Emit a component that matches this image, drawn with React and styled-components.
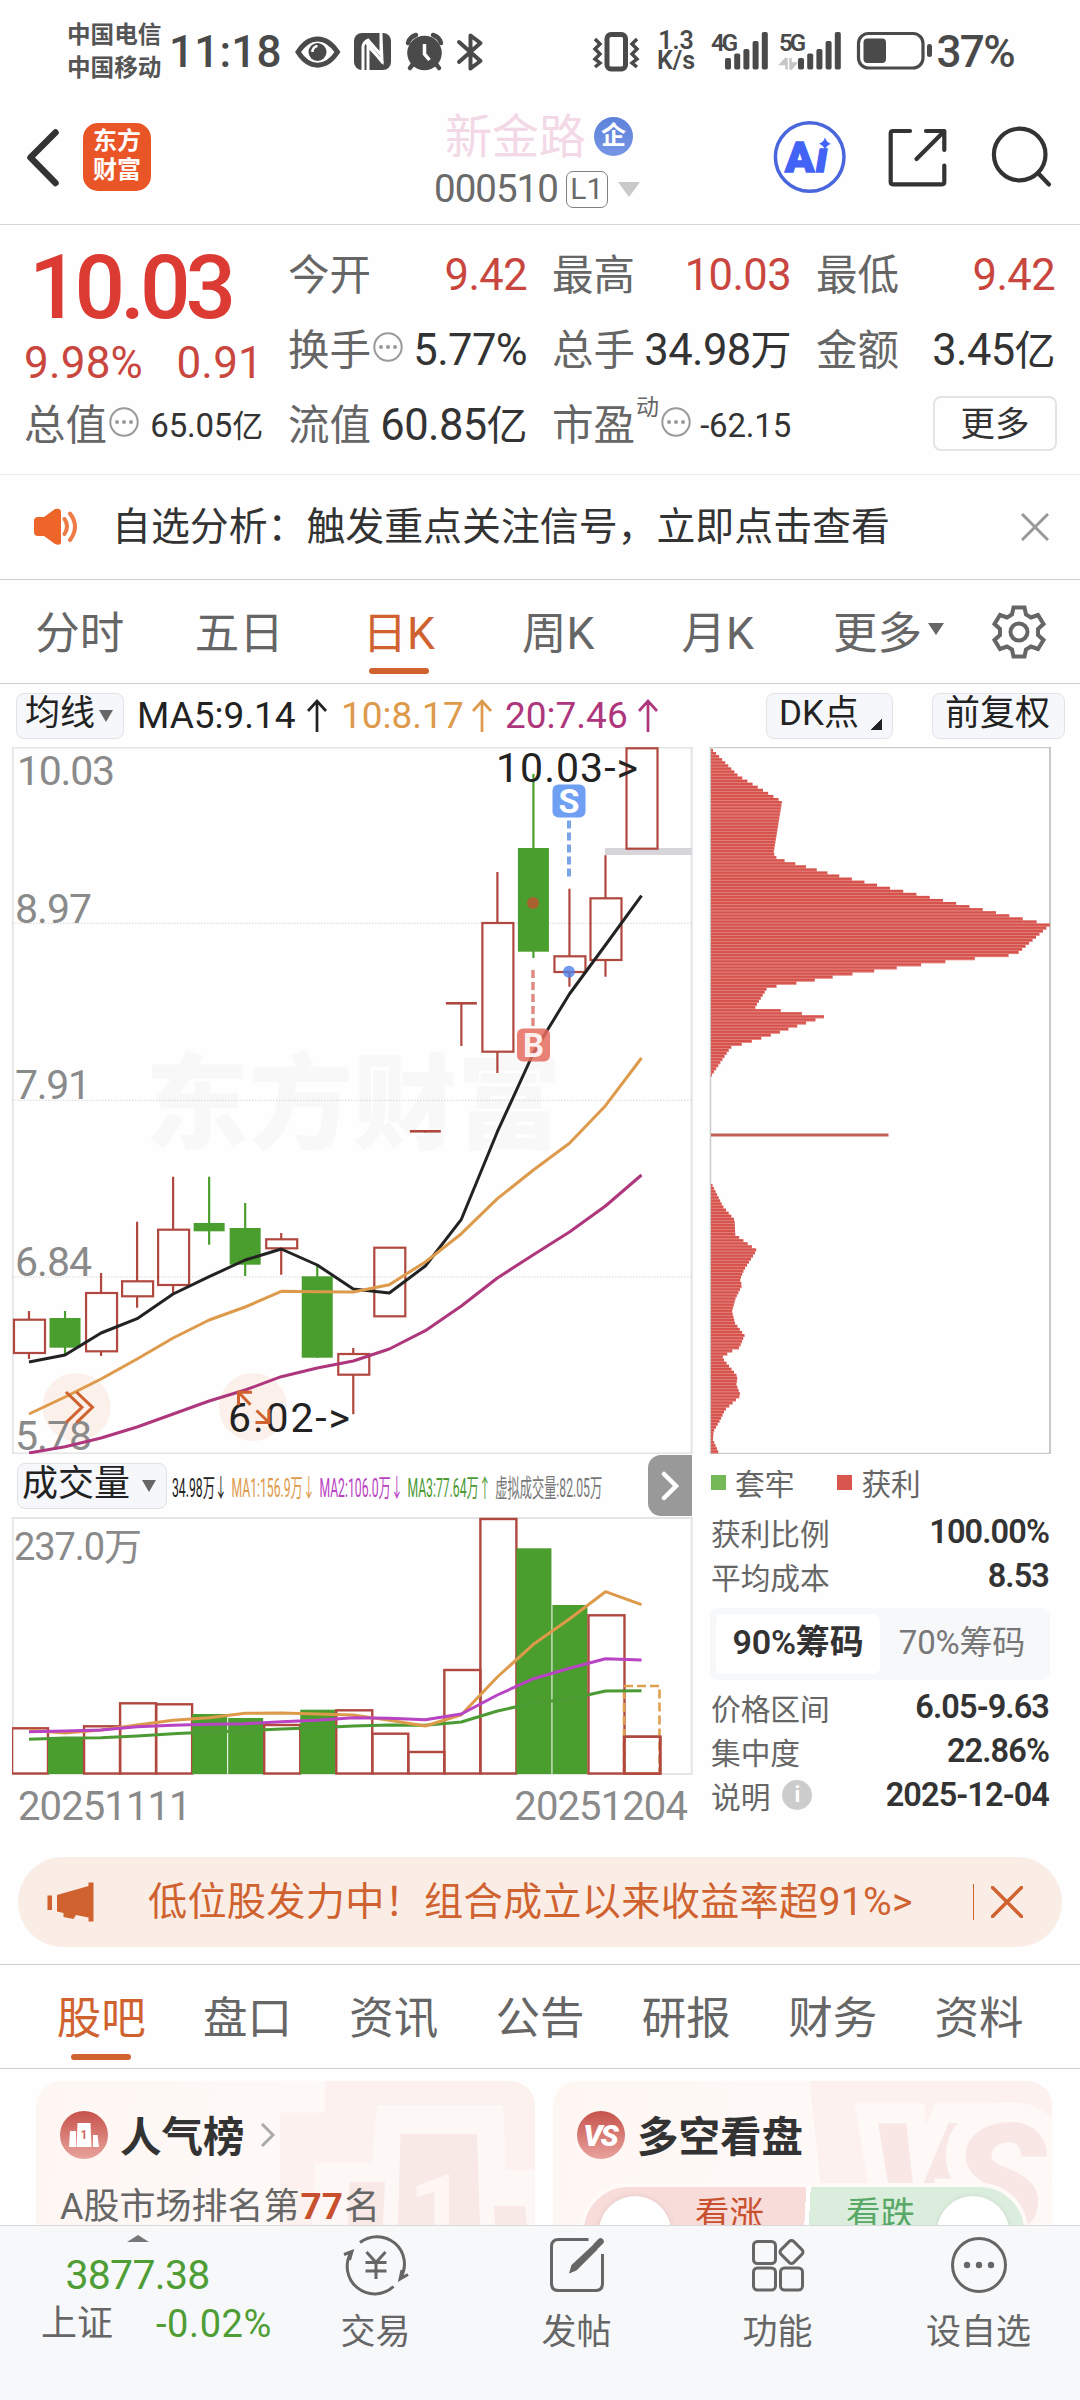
import styled, { createGlobalStyle } from "styled-components";

const GlobalStyle = createGlobalStyle`
  * {
    box-sizing: border-box;
  }
  body {
    margin: 0;
    background: #fefefe;
    font-family: Roboto, "Noto Sans CJK SC", sans-serif;
    color: #333;
  }
  svg {
    display: block;
    flex: none;
  }
`;

const UP = "#b0483f";
const DOWN = "#4a9e2e";
const ACCENT = "#cf622f";

const Page = styled.div`
  width: 1080px;
  height: 2400px;
  overflow: hidden;
  display: flex;
  flex-direction: column;
  white-space: nowrap;
`;

/* ---------- generic bits ---------- */

const Text = styled.span`
  font-size: ${(p) => p.$size}px;
  font-weight: ${(p) => p.$weight || 400};
  letter-spacing: ${(p) => p.$space || 0}px;
  color: ${(p) => p.$color || "#333"};
  line-height: 1;
`;

const Triangle = styled.i`
  width: 0;
  height: 0;
  border: ${(p) => p.$w / 2}px solid transparent;
  border-top: ${(p) => p.$h}px solid ${(p) => p.$color || "#666"};
  border-bottom: 0;
  margin-left: ${(p) => p.$left || 0}px;
`;

/* ---------- status bar ---------- */

const StatusBar = styled.div`
  height: 103px;
  padding: 0 66px 0 67px;
  display: flex;
  align-items: center;
`;

const Carriers = styled.div`
  width: 102px;
  font-size: 23.6px;
  line-height: 33px;
  font-weight: 700;
  color: #555;
`;

const Clock = styled.div`
  width: 125px;
  font-size: 44px;
  font-weight: 500;
  letter-spacing: 0.2px;
  color: #4a4a4a;
`;

const StatusIcons = styled.svg`
  color: #4a4a4a;
`;

const Speed = styled.div`
  width: 54px;
  margin: -2px 7px 0 9px;
  text-align: center;
  font-size: 25px;
  line-height: 20px;
  font-weight: 600;
  color: #4a4a4a;
`;

const Battery = styled.div`
  margin-left: auto;
  font-size: 44px;
  font-weight: 500;
  letter-spacing: -1.6px;
  color: #4a4a4a;
`;

/* ---------- header ---------- */

const Header = styled.header`
  height: 122px;
  padding-left: 24px;
  display: flex;
  align-items: center;
  border-bottom: 1px solid #d4d4d4;
`;

const Logo = styled.div`
  width: 68px;
  height: 68px;
  margin: 0 0 14px 21px;
  border-radius: 15px;
  background: #ea5528;
  color: #fff;
  font-size: 24px;
  line-height: 29px;
  font-weight: 700;
  text-align: center;
  padding-top: 4px;
`;

const TitleBlock = styled.div`
  width: 220px;
  margin-left: 283px;
`;

const TitleRow = styled.div`
  display: flex;
  align-items: center;
  height: ${(p) => p.$h}px;
  padding-left: ${(p) => p.$pad}px;
`;

const CompanyBadge = styled.div`
  width: 39px;
  height: 39px;
  margin-left: 8px;
  border-radius: 50%;
  background: linear-gradient(#5d80da, #7797e4);
  color: #fff;
  font-size: 25px;
  line-height: 37px;
  font-weight: 700;
  text-align: center;
`;

const Level = styled.div`
  width: 42px;
  height: 37px;
  margin-left: 8px;
  border: 1.5px solid #808080;
  border-radius: 7px;
  font-size: 30px;
  line-height: 34px;
  text-align: center;
  color: #6a6a6a;
`;

const HeaderActions = styled.svg`
  margin-left: 102px;
`;

/* ---------- quote ---------- */

const Quote = styled.section`
  height: 250px;
  padding: 13px 24px 0;
  display: grid;
  grid-template-columns: repeat(4, 240px);
  grid-template-rows: repeat(3, 75px);
  column-gap: 24px;
  border-bottom: 1px solid #ebebeb;
`;

const PriceBox = styled.div`
  grid-row: 1 / span 2;
  color: #dc3b33;
`;

const Price = styled.div`
  padding: 16px 0 0 5px;
  height: 107px;
  font-size: 89px;
  line-height: 68px;
  font-weight: 500;
  letter-spacing: -5px;
`;

const Change = styled.div`
  display: flex;
  justify-content: space-between;
  padding-right: 1px;
  font-size: 44px;
  line-height: 36px;
  letter-spacing: 0.2px;
  color: #c9463f;
`;

const Cell = styled.div`
  display: flex;
  align-items: center;
  padding: 0 1px 0 0;
`;

const Label = styled.span`
  font-size: 41.5px;
  line-height: 1;
  color: #666;
`;

const Value = styled.span`
  margin-left: auto;
  font-size: ${(p) => (p.$small ? 33 : 43.5)}px;
  letter-spacing: ${(p) => p.$space ?? -0.6}px;
  line-height: 1;
  color: ${(p) => (p.$up ? "#c9463f" : "#333")};
`;

const Cjk = styled.span`
  font-size: ${(p) => p.$size}px;
`;

const Sup = styled.sup`
  align-self: flex-start;
  margin: 8px 2px 0 1px;
  font-size: 23px;
  line-height: 1;
  color: #666;
`;

const DotsIcon = styled.svg`
  margin: -7px 0 0 ${(p) => p.$left || 0}px;
`;

const MoreButton = styled.button`
  width: 124px;
  height: 55px;
  margin-left: auto;
  margin-right: -2px;
  margin-top: -5px;
  border: 2px solid #e4e4e6;
  border-radius: 8px;
  background: none;
  font: 400 34.5px/44px "Noto Sans CJK SC", sans-serif;
  color: #333;
  padding: 0 0 5px;
`;

/* ---------- notice ---------- */

const Notice = styled.div`
  height: 105px;
  padding: 0 31px 0 33px;
  display: flex;
  align-items: center;
  border-bottom: 1px solid #d0d0d0;
`;

const NoticeText = styled.div`
  margin: -8px 0 0 33px;
  flex: 1;
  font-size: 38.9px;
`;

/* ---------- tabs ---------- */

const Tabs = styled.nav`
  height: 104px;
  display: flex;
  align-items: center;
  border-bottom: 1px solid #d0d0d0;
`;

const Tab = styled.div`
  position: relative;
  width: ${(p) => p.$w}px;
  height: 100%;
  padding-bottom: 5px;
  display: flex;
  align-items: center;
  justify-content: center;
  font-size: 44.5px;
  color: ${(p) => (p.$active ? ACCENT : "#666")};

  &::after {
    content: "";
    display: ${(p) => (p.$active ? "block" : "none")};
    position: absolute;
    bottom: ${(p) => p.$bar}px;
    left: calc(50% - 30px);
    width: 60px;
    height: 6px;
    border-radius: 3px;
    background: ${ACCENT};
  }
`;

const GearIcon = styled.svg`
  margin-left: 12px;
`;

/* ---------- moving average row ---------- */

const MaRow = styled.div`
  height: 63px;
  padding: 0 15px 0 16px;
  display: flex;
  align-items: center;
`;

const Chip = styled.div`
  width: ${(p) => p.$w}px;
  height: 46px;
  margin-left: ${(p) => p.$left || 0}px;
  padding-left: ${(p) => p.$pad}px;
  display: flex;
  flex: none;
  align-items: center;
  border: 1.5px solid #e0e2e6;
  border-radius: 8px;
  background: #f6f7fa;
  font-size: ${(p) => p.$size || 35}px;
  line-height: 44px;
  color: #222;
`;

const ChipText = styled.span`
  margin-top: -3px;
`;

const MaItem = styled.div`
  width: ${(p) => p.$w}px;
  margin-left: ${(p) => p.$left}px;
  display: flex;
  align-items: center;
  justify-content: space-between;
  font-size: 37px;
  color: ${(p) => p.$color};
`;

const Corner = styled.i`
  width: 12px;
  height: 12px;
  margin: 16px 0 0 11px;
  background: linear-gradient(135deg, transparent 50%, #222 50%);
`;

/* ---------- charts ---------- */

const ChartArea = styled.div`
  height: 1093px;
  display: flex;
`;

const Left = styled.div`
  width: 698px;
  padding-left: 12px;
`;

const Right = styled.div`
  width: 342px;
  margin-left: 11px;
`;

const AxisText = styled.text`
  font-family: Roboto, "Noto Sans CJK SC", sans-serif;
  font-size: ${(p) => p.$size || 41}px;
  fill: ${(p) => p.$fill || "#8a8a8a"};
`;

const Halo = styled(AxisText)`
  paint-order: stroke;
`;

const VolumeBar = styled.div`
  height: 63px;
  width: 680px;
  padding-left: 5px;
  display: flex;
  align-items: center;
`;

const VolumeLegend = styled.div`
  width: 470px;
  margin-left: 5px;
  display: flex;
  gap: 9px;
  font-size: 25px;
  transform: scaleX(0.488);
  transform-origin: left;
`;

const Colored = styled.span`
  flex: none;
  color: ${(p) => p.$color};
`;

const Expander = styled.div`
  width: 44px;
  height: 61px;
  flex: none;
  margin-left: auto;
  border-radius: 13px 0 0 13px;
  background: #999;
  display: flex;
  align-items: center;
  justify-content: center;
`;

const Dates = styled.div`
  display: flex;
  justify-content: space-between;
  width: 680px;
  padding: 9px 5px 0 6px;
  font-size: 40px;
  line-height: 46px;
  letter-spacing: -0.9px;
  color: #8a8a8a;
`;

const ChipLegend = styled.div`
  height: 56px;
  display: flex;
  align-items: center;
  font-size: 29.7px;
  color: #666;
`;

const Swatch = styled.i`
  width: 15px;
  height: 15px;
  background: ${(p) => p.$color};
  margin-right: 9px;
  margin-left: ${(p) => p.$left || 0}px;
`;

const StatRow = styled.div`
  height: 44px;
  display: flex;
  align-items: center;
  justify-content: space-between;
  padding: 0 2px 0 2px;
  font-size: 29.7px;
  color: #666;

  b {
    font-size: 32.5px;
    font-weight: 600;
    letter-spacing: -0.9px;
    color: #333;
  }
`;

const StatLabel = styled.span`
  display: flex;
  align-items: center;
`;

const Info = styled.i`
  width: 30px;
  height: 30px;
  margin-left: 12px;
  border-radius: 50%;
  background: #ccc;
  color: #fff;
  font: 700 22px/30px Roboto, sans-serif;
  text-align: center;
`;

const Toggle = styled.div`
  width: 340px;
  height: 72px;
  margin: 10px 0 5px 1px;
  padding: 6px;
  display: flex;
  border-radius: 8px;
  background: #f7f8fa;
`;

const ToggleItem = styled.div`
  width: 164px;
  border-radius: 7px;
  background: ${(p) => (p.$active ? "#fff" : "none")};
  color: ${(p) => (p.$active ? "#333" : "#777")};
  font-weight: ${(p) => (p.$active ? 600 : 400)};
  font-size: ${(p) => (p.$active ? 34 : 33)}px;
  line-height: 57px;
  letter-spacing: -0.2px;
  text-align: center;
`;

/* ---------- banner ---------- */

const Banner = styled.div`
  height: 90px;
  margin: 17px 18px;
  padding: 0 39px 0 29px;
  display: flex;
  align-items: center;
  border-radius: 45px;
  background: #faede6;
  color: ${ACCENT};
  font-size: 39.2px;
`;

const BannerText = styled.div`
  flex: 1;
  margin: -9px 0 0 54px;
  letter-spacing: 0.25px;
`;

const Divider = styled.i`
  width: 1.5px;
  height: 36px;
  margin-right: 17px;
  background: ${ACCENT};
`;

/* ---------- cards ---------- */

const SectionTabs = styled(Tabs)`
  height: 105px;
  padding-left: 28px;
  border-top: 1px solid #d0d0d0;
`;

const Cards = styled.div`
  height: 156px;
  overflow: hidden;
  padding: 12px 27px 0 36px;
  display: flex;
  gap: 18px;
`;

const Card = styled.div`
  position: relative;
  width: 499px;
  height: 200px;
  border-radius: 25px;
  overflow: hidden;
  background: linear-gradient(100deg, #fef6f3, #fefaf8 60%, #fdf3f1);
`;

const CardArt = styled.svg`
  position: absolute;
  left: 0;
  top: 0;
`;

const CardHead = styled.div`
  position: relative;
  height: 108px;
  padding-left: 24px;
  display: flex;
  align-items: center;
`;

const CardTitle = styled.div`
  margin: -3px 15px 0 12px;
  font-size: 41.5px;
  font-weight: 600;
  color: #333;
`;

const RankLine = styled.div`
  position: relative;
  padding-left: 24px;
  font-size: 36px;
  line-height: 36px;
  color: #666;

  b {
    font-size: 37px;
    color: #c9502f;
    margin: 0 1px;
  }
`;

const Vote = styled.div`
  position: relative;
  width: 448px;
  height: 96px;
  margin: -6px 0 0 27px;
  border: 4px solid #fff9f8;
  border-radius: 48px;
  overflow: hidden;
  display: flex;
  background: linear-gradient(93deg, #f7dcd9 50%, #fff 50%, #fff 51%, #dbeedd 51%);
`;

const VoteSide = styled.div`
  flex: 1;
  display: flex;
  flex-direction: ${(p) => (p.$right ? "row-reverse" : "row")};
  padding: ${(p) => (p.$right ? "9px 15px 0 0" : "9px 0 0 15px")};
  font-size: 34.5px;
  line-height: 36px;
  color: ${(p) => (p.$right ? "#58a868" : "#c9502f")};
`;

const VoteDot = styled.i`
  width: 72px;
  height: 72px;
  border-radius: 50%;
  background: #fff;
  box-shadow: 0 0 5px rgba(120, 80, 80, 0.15);
  margin: ${(p) => (p.$right ? "0 0 0 22px" : "0 24px 0 0")};
`;

/* ---------- bottom nav ---------- */

const BottomNav = styled.footer`
  flex: 1;
  display: flex;
  border-top: 1.5px solid #d8d9db;
  background: #f7f8fa;
`;

const IndexBox = styled.div`
  width: 275px;
  padding-top: 9px;
  display: flex;
  flex-direction: column;
  align-items: center;
`;

const IndexValue = styled.div`
  margin-top: 9px;
  font-size: 41px;
  line-height: 48px;
  letter-spacing: -0.7px;
  color: #4f9d35;
`;

const IndexRow = styled.div`
  align-self: stretch;
  display: flex;
  align-items: center;
  justify-content: space-between;
  padding: 1px 3px 0 41px;
  font-size: 36px;
  line-height: 48px;
  color: #666;
`;

const NavItem = styled.div`
  width: 201px;
  padding-top: 6px;
  display: flex;
  flex-direction: column;
  align-items: center;
  font-size: 35px;
  line-height: 46px;
  color: #666;

  svg {
    margin-bottom: 12px;
  }
`;

/* ---------- data ---------- */

const cx = (i) => 29 + 36.03 * i;

// [up, bodyTop, bodyBottom, wickTop, wickBottom]
const candles = [
  [1, 1319.7, 1353, 1311, 1359],
  [0, 1318, 1347.7, 1311, 1354],
  [1, 1293, 1351.3, 1273, 1356],
  [1, 1281.3, 1296.3, 1221.7, 1307.7],
  [1, 1229.7, 1285, 1176.7, 1294],
  [0, 1223, 1231.3, 1176.7, 1244.7],
  [0, 1228, 1264.7, 1203, 1276],
  [1, 1239.3, 1248.3, 1233, 1274.7],
  [0, 1276.3, 1357.7, 1265, 1357.7],
  [1, 1354, 1374.7, 1348, 1414.3],
  [1, 1247.7, 1316.3, 1247.7, 1316.3],
  [1, 1131.3, 1131.3, 1131.3, 1132.6],
  [1, 1003.3, 1003.3, 1003.3, 1046],
  [1, 923, 1051.7, 872, 1073],
  [0, 848, 951.7, 774, 958],
  [1, 956.3, 972, 888.7, 986.7],
  [1, 898.3, 960, 855.3, 976.7],
  [1, 748.3, 848.7, 748.3, 848.7],
];

const ma5 = [1362, 1355, 1333, 1318.7, 1294, 1276.7, 1260, 1249, 1265, 1289, 1293, 1266, 1219.3, 1131.7, 1053, 994, 945, 895.7];
const ma10 = [1414, 1397, 1379, 1359, 1338, 1320, 1307, 1291.3, 1291.7, 1292, 1284.7, 1262, 1233.7, 1198.7, 1170, 1143.3, 1105.7, 1058];
const ma20 = [1453, 1446.7, 1438, 1427, 1414, 1401, 1390, 1376.7, 1368, 1361, 1349, 1330.7, 1306, 1278, 1254.7, 1232, 1206, 1175];

const volumes = [1727.3, 1736.3, 1725.3, 1702.3, 1703.3, 1713, 1717, 1724, 1708.7, 1709.3, 1732.7, 1751, 1669, 1518, 1547.3, 1604, 1614.3, 1735.7];
const greenVolumes = [1, 5, 6, 8, 14, 15];
const vma1 = [1729.3, 1732, 1729, 1724, 1719.3, 1716.7, 1712.3, 1712, 1713, 1714, 1719.3, 1725, 1713.7, 1676, 1643.3, 1618, 1590.7, 1603.7];
const vma2 = [1730.7, 1730, 1729, 1725.7, 1724.3, 1723.3, 1722.7, 1720.7, 1719.3, 1716.7, 1717.3, 1718.7, 1713, 1694, 1677.7, 1667.3, 1657.7, 1659];
const vma3 = [1738.3, 1737, 1736.7, 1735, 1732.7, 1731, 1729.7, 1728, 1726.7, 1725, 1724, 1724.3, 1721, 1710, 1702, 1698, 1690, 1689.7];

// chip distribution outline: [y, right edge]
const profile = [
  [749, 713], [774, 738], [777, 743], [800, 782], [852, 773.5], [857, 777], [872.7, 832], [885, 882.6],
  [903.3, 961.8], [916.7, 1020], [923.3, 1050], [953.3, 1016], [956, 988], [958.3, 960], [967.3, 888.5],
  [974, 841], [980.7, 802], [983.3, 785], [986, 767.6], [1006, 755], [1008.7, 778], [1012, 800.7],
  [1015.3, 824.5], [1021.7, 805], [1028.3, 786], [1031.7, 776.6], [1040.7, 748.7], [1046, 730.7], [1074, 711.5],
];
const profileLow = [
  [1181, 711], [1205, 723], [1218.3, 734.5], [1233.3, 735.3], [1248.7, 756.7], [1268.3, 744], [1278.3, 740],
  [1284, 742], [1296.7, 735.6], [1310, 732], [1321.7, 735], [1334, 744.5], [1346, 739.5], [1350, 730.7],
  [1356, 722], [1375, 737.5], [1383.3, 736.4], [1394, 740.6], [1408.3, 725], [1418.3, 720.3], [1430, 713.5],
  [1438.3, 713], [1452, 719],
];

const rowsOf = (points) => {
  const rows = [];
  for (let y = points[0][0]; y < points[points.length - 1][0]; y += 3.06) {
    const k = Math.max(1, points.findIndex((p) => p[0] > y));
    const [y0, x0] = points[k - 1];
    const [y1, x1] = points[k];
    rows.push([y, x0 + ((x1 - x0) * (y - y0)) / (y1 - y0)]);
  }
  return rows;
};

const line = (ys) => ys.map((y, i) => `${cx(i)},${y}`).join(" ");

const quoteCells = [
  ["今开", "9.42"],
  ["最高", "10.03"],
  ["最低", "9.42"],
];

/* ---------- icons ---------- */

const UpArrow = () => (
  <svg width="20" height="34" viewBox="0 0 20 34" fill="none" stroke="currentColor" strokeWidth="2.7">
    <path d="M10 33V2M1 12l9-10 9 10" />
  </svg>
);

const Dots = ({ left }) => (
  <DotsIcon $left={left} width="30" height="30" viewBox="-15 -15 30 30">
    <circle r="13.7" fill="none" stroke="#999" strokeWidth="2" />
    <circle cx="-7" r="2" fill="#999" />
    <circle r="2" fill="#999" />
    <circle cx="7" r="2" fill="#999" />
  </DotsIcon>
);

const Signal = ({ x }) => (
  <g fill="currentColor">
    {[58, 53.5, 49, 41, 32].map((y, i) => (
      <rect key={y} x={x + i * 9.2} y={y} width="6" height={69.5 - y} rx="1.8" />
    ))}
  </g>
);

/* ---------- sections ---------- */

const KChart = () => (
  <svg width="681" height="707" viewBox="12 747 681 707">
    <rect x="12.7" y="747.5" width="679" height="706" fill="none" stroke="#e4e4e4" strokeWidth="2" />
    <AxisText x="145" y="1141" $size={104} $fill="#f8f8f8" fontWeight="900" textLength="416">
      东方财富
    </AxisText>
    {[923.3, 1100.3, 1277].map((y) => (
      <path key={y} d={`M12 ${y}H692`} stroke="#d6d6d6" strokeDasharray="1.5 1.5" />
    ))}
    <circle cx="76.5" cy="1407" r="34" fill="#fbf0ea" />
    <circle cx="253" cy="1407" r="34" fill="#fbf0ea" />
    <AxisText x="17" y="785" textLength="98">10.03</AxisText>
    <AxisText x="15" y="923" textLength="77">8.97</AxisText>
    <AxisText x="15" y="1099" textLength="76">7.91</AxisText>
    <AxisText x="15" y="1276" textLength="77">6.84</AxisText>
    <AxisText x="15" y="1449.5" textLength="77">5.78</AxisText>
    <rect x="605" y="848" width="87" height="7" fill="#d5d5da" />
    {candles.map(([up, top, bottom, high, low], i) => (
      <g key={i}>
        <path
          d={`M${cx(i)} ${high}V${up ? top : low}${up ? `M${cx(i)} ${bottom}V${low}` : ""}`}
          stroke={up ? UP : DOWN}
          strokeWidth="2.2"
        />
        {up && top === bottom && <path d={`M${cx(i) - 15.5} ${top}h31`} stroke={UP} strokeWidth="2.6" />}
        {up && top !== bottom ? (
          <rect x={cx(i) - 15} y={top} width="31" height={bottom - top} fill="none" stroke={UP} strokeWidth="2.2" />
        ) : null}
        {!up && <rect x={cx(i) - 15.5} y={top} width="31" height={bottom - top} fill={DOWN} />}
      </g>
    ))}
    <g fill="none" strokeWidth="3" strokeLinejoin="round">
      <polyline points={line(ma20)} stroke="#ae367c" />
      <polyline points={line(ma5)} stroke="#222" />
      <polyline points={line(ma10)} stroke="#dd9a4b" />
    </g>
    <circle cx="533" cy="903" r="6" fill="#a9622f" />
    <circle cx="569" cy="971.7" r="6" fill="#4f7fe6" fillOpacity="0.8" />
    <path d="M569 820.5V877" stroke="#7aa4e6" strokeWidth="4" strokeDasharray="8 4" />
    <path d="M533 970V1027" stroke="#dc8c84" strokeWidth="3.5" strokeDasharray="8 4" />
    <rect x="552.5" y="784.5" width="33" height="33" rx="6" fill="#6f9ff2" />
    <AxisText x="569" y="812.5" $size={34} $fill="#fff" fontWeight="700" textAnchor="middle">
      S
    </AxisText>
    <rect x="517" y="1028.5" width="33" height="33" rx="6" fill="#e56b5e" fillOpacity="0.85" />
    <AxisText x="533.5" y="1057" $size={33} $fill="#fff" fillOpacity="0.9" fontWeight="700" textAnchor="middle">
      B
    </AxisText>
    <AxisText x="496" y="782" $fill="#222" textLength="142">
      10.03-&gt;
    </AxisText>
    <AxisText x="228" y="1432" $fill="#222" textLength="122">
      6.02-&gt;
    </AxisText>
    <g fill="none" stroke={ACCENT} strokeWidth="3">
      <path d="M66 1392l16 15.3-16 15.3M76.5 1392l16 15.3-16 15.3" />
      <path d="M252 1392.3h-13.5v13M239 1392.8l11.5 12M255.5 1422.5h13.5v-13.5M268.5 1422l-12-11.5" />
    </g>
  </svg>
);

const VolumeChart = () => (
  <svg width="681" height="258" viewBox="12 1516 681 258">
    <rect x="12.7" y="1517" width="679" height="256" fill="none" stroke="#e4e4e4" strokeWidth="2" />
    <AxisText x="14" y="1559" $size={38} textLength="128">
      237.0万
    </AxisText>
    {volumes.map((y, i) =>
      greenVolumes.includes(i) ? (
        <rect key={i} x={cx(i) - 17} y={y} width="35" height={1773 - y} fill={DOWN} />
      ) : (
        <rect key={i} x={cx(i) - 17} y={y} width="36" height={1772.5 - y} fill="none" stroke={UP} strokeWidth="2.4" />
      )
    )}
    <rect x="624" y="1685" width="35.5" height="88" fill="none" stroke="#e0a050" strokeWidth="2.6" strokeDasharray="9 4" />
    <rect x="624" y="1735.7" width="36" height="37" fill="none" stroke={UP} strokeWidth="2.4" />
    <g fill="none" strokeWidth="3" strokeLinejoin="round">
      <polyline points={line(vma3)} stroke="#4c9a34" />
      <polyline points={line(vma1)} stroke="#dd9a4b" />
      <polyline points={line(vma2)} stroke="#b843c3" />
    </g>
  </svg>
);

const ChipChart = () => (
  <svg width="342" height="707" viewBox="709 747 342 707">
    <path d="M1050 747.5H710.5V1453.5H1050" fill="none" stroke="#cbcbcb" strokeWidth="1.5" />
    <path d="M1050 747V1454" stroke="#c8c8c8" strokeWidth="2" />
    {[...rowsOf(profile), ...rowsOf(profileLow)].map(([y, x]) => (
      <g key={y}>
        <rect x="711" y={y} width={x - 711} height="3.1" fill="#d6524c" />
        <rect x="711" y={y + 2.4} width={x - 711} height="0.6" fill="#eb9993" />
      </g>
    ))}
    <rect x="711" y="1133.5" width="177.5" height="3" fill="#c2605a" />
  </svg>
);

const App = () => {
  return (
    <Page>
      <GlobalStyle />
      <StatusBar>
        <Carriers>
          中国电信
          <br />
          中国移动
        </Carriers>
        <Clock>11:18</Clock>
        <StatusIcons width="346" height="103" viewBox="294 0 346 103">
          <path d="M298 52C309 34.5 326 34.5 337.5 52C326 69.5 309 69.5 298 52Z" fill="none" stroke="currentColor" strokeWidth="5" />
          <circle cx="317.5" cy="52" r="9" fill="currentColor" />
          <path d="M312.5 52a5.5 5.5 0 0 1 5-6" stroke="#fff" strokeWidth="2.5" fill="none" />
          <rect x="354" y="33" width="37" height="37" rx="8" fill="currentColor" />
          <path d="M363 70V46a9 9 0 0 1 5-6l13 15V33M381 35l1 26-14-15v24M366 42l17 21" stroke="#fff" strokeWidth="3" fill="none" />
          <circle cx="424.5" cy="53" r="17.3" fill="currentColor" />
          <path d="M408 43q1.5-6 8-8M441 43q-1.5-6-8-8M413 64l-3 4M436 64l3 4" fill="none" stroke="currentColor" strokeWidth="4.5" strokeLinecap="round" />
          <path d="M424.5 44v10l5 6" stroke="#fff" strokeWidth="3.5" fill="none" />
          <path d="M459 42l21.5 19L470.5 68.5V35.5L480.5 43 459 62" fill="none" stroke="currentColor" strokeWidth="4" strokeLinejoin="round" strokeLinecap="round" />
          <rect x="607" y="34.5" width="18.5" height="34.5" rx="4" fill="none" stroke="currentColor" strokeWidth="5" />
          <path d="M595 39l5 5-5 5 5 5-5 5 5 4-5 4M637 39l-5 5 5 5-5 5 5 5-5 4 5 4" fill="none" stroke="currentColor" strokeWidth="3.5" />
        </StatusIcons>
        <Speed>
          1.3
          <br />
          K/s
        </Speed>
        <StatusIcons width="224" height="103" viewBox="710 0 224 103">
          <AxisText x="711" y="50.5" $size={24} $fill="#4a4a4a" fontWeight="600" textLength="27">
            4G
          </AxisText>
          <Signal x={725} />
          <AxisText x="779" y="50.5" $size={24} $fill="#4a4a4a" fontWeight="600" textLength="27">
            5G
          </AxisText>
          <Signal x={798} />
          <path d="M786.5 58v11.5M786.5 58l-5.5 6h5M790.5 69.5V58M790.5 69.5l5-6h-5" stroke="#c6c6c6" strokeWidth="2.5" fill="#c6c6c6" />
          <rect x="858.5" y="33.5" width="64.5" height="34.5" rx="10" fill="none" stroke="currentColor" strokeWidth="3.2" />
          <rect x="863.5" y="38.5" width="22.5" height="24.5" rx="4" fill="currentColor" />
          <rect x="927" y="44" width="5" height="13" rx="2.5" fill="currentColor" />
        </StatusIcons>
        <Battery>37%</Battery>
      </StatusBar>

      <Header>
        <svg width="38" height="80" viewBox="24 124 38 80">
          <path d="M55.5 132.5L30.5 157.5l25 25.5" fill="none" stroke="#333" strokeWidth="6.5" strokeLinecap="round" strokeLinejoin="round" />
        </svg>
        <Logo>
          东方
          <br />
          财富
        </Logo>
        <TitleBlock>
          <TitleRow $h={51} $pad={11}>
            <Text $size={47} $color="#f3d9e6">新金路</Text>
            <CompanyBadge>企</CompanyBadge>
          </TitleRow>
          <TitleRow $h={54} $pad={0}>
            <Text $size={38.5} $space={-1} $color="#6a6a6a">000510</Text>
            <Level>L1</Level>
            <Triangle $w={22} $h={15} $left={10} $color="#c9c9c9" />
          </TitleRow>
        </TitleBlock>
        <HeaderActions width="300" height="100" viewBox="755 114 300 100">
          <circle cx="808.7" cy="157" r="34.3" fill="none" stroke="#4a66dd" strokeWidth="3.5" />
          <AxisText x="784" y="171.5" $size={43} $fill="#4263f5" stroke="#4263f5" strokeWidth="1.5" fontWeight="900">A</AxisText>
          <AxisText x="815" y="171.5" $size={42} $fill="#4263f5" stroke="#4263f5" strokeWidth="1.5" fontWeight="900" fontStyle="italic">ı</AxisText>
          <path d="M824 137.5q1.5 5 6 6.3-4.5 1.5-6 6.3-1.5-5-6-6.3 4.5-1.5 6-6.3Z" fill="#4263f5" />
          <g fill="none" stroke="#333" strokeWidth="4.2" strokeLinecap="round" strokeLinejoin="round">
            <path d="M909 131H892q-2.3 0-2.3 2.3V182q0 2.3 2.3 2.3H941q2.3 0 2.3-2.3V165.5M925 131h18.3v19M942.5 132L915.5 159" />
            <circle cx="1018.7" cy="154.5" r="25.8" />
            <path d="M1037 173l11 11.5" />
          </g>
        </HeaderActions>
      </Header>

      <Quote>
        <PriceBox>
          <Price>10.03</Price>
          <Change>
            <span>9.98%</span>
            <span>0.91</span>
          </Change>
        </PriceBox>
        {quoteCells.map(([label, value]) => (
          <Cell key={label}>
            <Label>{label}</Label>
            <Value $up>{value}</Value>
          </Cell>
        ))}
        <Cell>
          <Label>换手</Label>
          <Dots left={2} />
          <Value>5.77%</Value>
        </Cell>
        <Cell>
          <Label>总手</Label>
          <Value>34.98<Cjk $size={41}>万</Cjk></Value>
        </Cell>
        <Cell>
          <Label>金额</Label>
          <Value>3.45<Cjk $size={41}>亿</Cjk></Value>
        </Cell>
        <Cell>
          <Label>总值</Label>
          <Dots left={2} />
          <Value $small $space={-0.2}>65.05<Cjk $size={31}>亿</Cjk></Value>
        </Cell>
        <Cell>
          <Label>流值</Label>
          <Value>60.85<Cjk $size={41}>亿</Cjk></Value>
        </Cell>
        <Cell>
          <Label>市盈</Label>
          <Sup>动</Sup>
          <Dots />
          <Value $small $space={-0.2}>-62.15</Value>
        </Cell>
        <Cell>
          <MoreButton>更多</MoreButton>
        </Cell>
      </Quote>

      <Notice>
        <svg width="46" height="38" viewBox="33 508 46 38">
          <path d="M34 521q0-4 4-4h6l11-8q6-1 6 3v30q0 4-6 2l-11-8h-6q-4 0-4-4Z" fill="#ee6529" />
          <path d="M64.5 519q5 7 0 15M70 513.5q10 13 0 26.5" fill="none" stroke="#ee7a45" strokeWidth="4" strokeLinecap="round" />
        </svg>
        <NoticeText>自选分析：触发重点关注信号，立即点击查看</NoticeText>
        <svg width="28" height="28" viewBox="0 0 28 28">
          <path d="M1 1l26 26M27 1L1 27" stroke="#999" strokeWidth="3" />
        </svg>
      </Notice>

      <Tabs>
        {["分时", "五日", "日K", "周K", "月K"].map((t) => (
          <Tab key={t} $w={159.5} $bar={9} $active={t === "日K"}>
            {t}
          </Tab>
        ))}
        <Tab $w={182}>
          更多
          <Triangle $w={16} $h={12} $left={6} />
        </Tab>
        <GearIcon width="54" height="54" viewBox="-27 -27 54 54" fill="none" stroke="#666" strokeWidth="4">
          <path d="M-5.5 -24.5H5.5L7 -17.5L12 -14.5L19 -17L24.5 -8L19 -3V3L24.5 8L19 17L12 14.5L7 17.5L5.5 24.5H-5.5L-7 17.5L-12 14.5L-19 17L-24.5 8L-19 3V-3L-24.5 -8L-19 -17L-12 -14.5L-7 -17.5Z" />
          <circle r="8.5" />
        </GearIcon>
      </Tabs>

      <MaRow>
        <Chip $w={108} $pad={8}>
          <ChipText>均线</ChipText>
          <Triangle $w={15} $h={12} $left={4} />
        </Chip>
        <MaItem $w={190} $left={13} $color="#222">MA5:9.14<UpArrow /></MaItem>
        <MaItem $w={151} $left={14} $color="#dd9a4b">10:8.17<UpArrow /></MaItem>
        <MaItem $w={153} $left={13} $color="#ae367c">20:7.46<UpArrow /></MaItem>
        <Chip $w={127} $left={108} $pad={12}>
          <ChipText>DK点</ChipText>
          <Corner />
        </Chip>
        <Chip $w={133} $left={39} $pad={12}>
          <ChipText>前复权</ChipText>
        </Chip>
      </MaRow>

      <ChartArea>
        <Left>
          <KChart />
          <VolumeBar>
            <Chip $w={150} $pad={4} $size={36}>
              <ChipText>成交量</ChipText>
              <Triangle $w={15} $h={12} $left={12} />
            </Chip>
            <VolumeLegend>
              <Colored $color="#222">34.98万↓</Colored>
              <Colored $color="#dd9a4b">MA1:156.9万↓</Colored>
              <Colored $color="#b843c3">MA2:106.0万↓</Colored>
              <Colored $color="#4c9a34">MA3:77.64万↑</Colored>
              <Colored $color="#777">虚拟成交量:82.05万</Colored>
            </VolumeLegend>
            <Expander>
              <svg width="18" height="30" viewBox="0 0 18 30">
                <path d="M3 3l12 12L3 27" fill="none" stroke="#fff" strokeWidth="4.5" strokeLinecap="round" />
              </svg>
            </Expander>
          </VolumeBar>
          <VolumeChart />
          <Dates>
            <span>20251111</span>
            <span>20251204</span>
          </Dates>
        </Left>
        <Right>
          <ChipChart />
          <ChipLegend>
            <Swatch $color="#74b857" $left={2} />
            套牢
            <Swatch $color="#d9564f" $left={43} />
            获利
          </ChipLegend>
          <StatRow>获利比例<b>100.00%</b></StatRow>
          <StatRow>平均成本<b>8.53</b></StatRow>
          <Toggle>
            <ToggleItem $active>90%筹码</ToggleItem>
            <ToggleItem>70%筹码</ToggleItem>
          </Toggle>
          <StatRow>价格区间<b>6.05-9.63</b></StatRow>
          <StatRow>集中度<b>22.86%</b></StatRow>
          <StatRow>
            <StatLabel>说明<Info>i</Info></StatLabel>
            <b>2025-12-04</b>
          </StatRow>
        </Right>
      </ChartArea>

      <Banner>
        <svg width="47" height="40" viewBox="47 1881 47 40" fill={ACCENT}>
          <path d="M47.5 1894.5h4.5v14.5h-4.5ZM57 1894l31.5-9v-3.5h5v39h-5v-4l-12.5-2.5-2.5 4-10-2v-4l-6.5-1.5Z" />
        </svg>
        <BannerText>低位股发力中！组合成立以来收益率超91%&gt;</BannerText>
        <Divider />
        <svg width="32" height="32" viewBox="0 0 32 32">
          <path d="M1.5 1.5l29 29M30.5 1.5l-29 29" stroke={ACCENT} strokeWidth="3.5" strokeLinecap="round" />
        </svg>
      </Banner>

      <SectionTabs>
        {["股吧", "盘口", "资讯", "公告", "研报", "财务", "资料"].map((t) => (
          <Tab key={t} $w={146.3} $bar={8} $active={t === "股吧"}>
            {t}
          </Tab>
        ))}
      </SectionTabs>

      <Cards>
        <Card>
          <CardArt width="499" height="144" viewBox="36 2081 499 144">
            <path d="M325 2081H535V2225H280V2112.5H325Z" fill="#fcf1ee" />
            <path d="M315 2163H372L377 2105H503L506 2170H535V2225H312Z" fill="#fdf8f5" />
            <path d="M400.5 2134H477L480 2225H398ZM349.5 2182H385L383 2225H348ZM494 2206H525L527 2225H495Z" fill="#f9e9e6" />
            <AxisText x="408" y="2250" $size={105} $fill="#fdf6f3" fontWeight="700">1</AxisText>
          </CardArt>
          <CardHead>
            <svg width="48" height="48" viewBox="-24 -24 48 48">
              <defs>
                <linearGradient id="badge" x2="0" y2="1">
                  <stop stopColor="#c6524b" />
                  <stop offset="1" stopColor="#e8a39d" />
                </linearGradient>
              </defs>
              <circle r="24" fill="url(#badge)" />
              <path d="M-14 -4h6v16h-7ZM-6.5 -12h13l1 24h-15ZM9 0h4.5l1.5 12h-6Z" fill="#fff" />
              <AxisText x="0" y="4" $size={12} $fill="#cf6a63" fontWeight="700" textAnchor="middle">1</AxisText>
            </svg>
            <CardTitle>人气榜</CardTitle>
            <svg width="15" height="24" viewBox="0 0 15 24">
              <path d="M2 1l11 11L2 23" fill="none" stroke="#aaa" strokeWidth="3" />
            </svg>
          </CardHead>
          <RankLine>
            A股市场排名第<b>77</b>名
          </RankLine>
        </Card>
        <Card>
          <CardArt width="499" height="144" viewBox="553 2081 499 144">
            <path d="M809.5 2081H1052V2225H825Z" fill="#fcf1ee" />
            <Halo x="868" y="2234" $size={155} $fill="#f9e7e5" stroke="#fef8f6" strokeWidth="40" fontWeight="900" fontStyle="italic" textLength="178">
              VS
            </Halo>
          </CardArt>
          <CardHead>
            <svg width="48" height="48" viewBox="-24 -24 48 48">
              <circle r="24" fill="url(#badge)" />
              <AxisText x="-1" y="11" $size={30} $fill="#fff" fontWeight="900" fontStyle="italic" textAnchor="middle" letterSpacing="-2">
                VS
              </AxisText>
            </svg>
            <CardTitle>多空看盘</CardTitle>
          </CardHead>
          <Vote>
            <VoteSide>
              <VoteDot />
              看涨
            </VoteSide>
            <VoteSide $right>
              <VoteDot $right />
              看跌
            </VoteSide>
          </Vote>
        </Card>
      </Cards>

      <BottomNav>
        <IndexBox>
          <svg width="22" height="7" viewBox="0 0 22 7">
            <path d="M0 7L11 0l11 7Z" fill="#777" />
          </svg>
          <IndexValue>3877.38</IndexValue>
          <IndexRow>
            上证
            <Text $size={38} $space={0.6} $color="#4f9d35">-0.02%</Text>
          </IndexRow>
        </IndexBox>
        <NavItem>
          <svg width="66" height="66" viewBox="-33 -33 66 66" fill="none" stroke="#666" strokeWidth="3">
            <path d="M-16 -22.5A27.5 27.5 0 0 1 25 12.5M32 9.5l-8 4.5 2-9M17.5 21.5A27.5 27.5 0 0 1 -25 -12.5M-32 -10.5l8-3-2.5 8.5" />
            <path d="M-9.5 -13L0 -2.5 9.5 -13M0 -2.5V14M-10.5 -2.5h21M-10.5 6h21" />
          </svg>
          交易
        </NavItem>
        <NavItem>
          <svg width="66" height="66" viewBox="-33 -33 66 66" fill="none" stroke="#666" strokeWidth="3">
            <path d="M11.5 -25.5H-18.5q-7 0-7 7V18.5q0 7 7 7H18.5q7 0 7-7V-11" />
            <path d="M-8 8.5l2.5-8.5L16.5 -20.5l4.5 4.5L-0.5 5.5Z" fill="#666" stroke="none" />
            <path d="M19.5 -19.5l4-4" strokeWidth="6.5" strokeLinecap="round" />
          </svg>
          发帖
        </NavItem>
        <NavItem>
          <svg width="66" height="66" viewBox="-33 -33 66 66" fill="none" stroke="#666" strokeWidth="3">
            <rect x="-24.5" y="-23.5" width="22" height="22" rx="4" />
            <rect x="-24.5" y="3" width="22" height="22" rx="4" />
            <rect x="2.5" y="3" width="22" height="22" rx="4" />
            <rect x="4.5" y="-22" width="18" height="18" rx="3" transform="rotate(45 13.5 -13)" />
          </svg>
          功能
        </NavItem>
        <NavItem>
          <svg width="66" height="66" viewBox="-33 -33 66 66">
            <circle r="26.5" fill="none" stroke="#666" strokeWidth="3" />
            <circle cx="-12" r="3.2" fill="#666" />
            <circle r="3.2" fill="#666" />
            <circle cx="12" r="3.2" fill="#666" />
          </svg>
          设自选
        </NavItem>
      </BottomNav>
    </Page>
  );
};

export default App;
